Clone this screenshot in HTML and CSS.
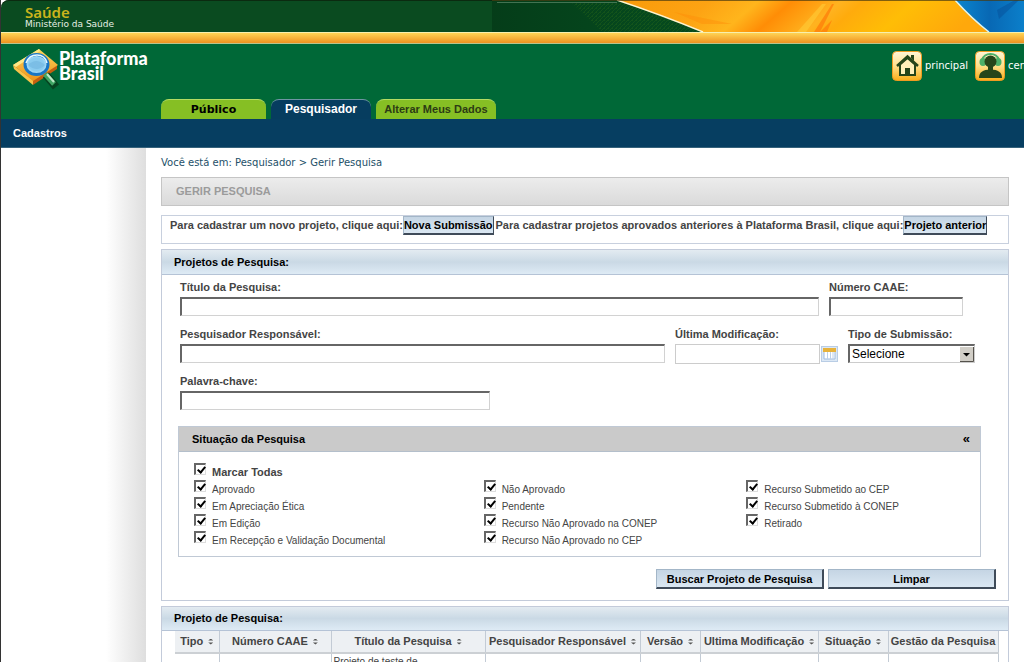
FILE: index.html
```html
<!DOCTYPE html>
<html lang="pt-BR">
<head>
<meta charset="utf-8">
<title>Plataforma Brasil</title>
<link rel="stylesheet" href="styles.css">
</head>
<body>
<header>
  <div class="banner">
    <div class="ministry"><span class="ministry-title">Saúde</span><span class="ministry-sub">Ministério da Saúde</span></div>
    <svg class="banner-art" viewBox="0 0 532 32" aria-hidden="true">
      <defs>
        <linearGradient id="dark"><stop offset="0" stop-color="#053d19"/><stop offset=".3" stop-color="#05491e"/><stop offset="1" stop-color="#004c20"/></linearGradient>
        <linearGradient id="silk" x2="1" y2=".1"><stop offset="0" stop-color="#f99a0a"/><stop offset=".25" stop-color="#fda313"/><stop offset=".38" stop-color="#ffb51c"/><stop offset=".47" stop-color="#ff8d06"/><stop offset=".54" stop-color="#ffa112"/><stop offset=".6" stop-color="#ffb320"/><stop offset=".66" stop-color="#ffab0c"/><stop offset=".8" stop-color="#ffbd06"/><stop offset="1" stop-color="#ffa80b"/></linearGradient>
        <linearGradient id="sky"><stop offset="0" stop-color="#0a86cf"/><stop offset=".5" stop-color="#0868b4"/><stop offset="1" stop-color="#0b7fca"/></linearGradient>
        <pattern id="weave" width="4" height="4" patternUnits="userSpaceOnUse"><path d="M0 4 4 0M0 0l1 1" stroke="#2f6b16" stroke-opacity=".5" stroke-width=".7"/></pattern>
      </defs>
      <path fill="url(#dark)" d="M0 0h532v32H0z"/>
      <path fill="url(#weave)" d="M80 3h70l62 29H110z"/>
      <path stroke="#6a9676" stroke-opacity=".6" d="M5 2.500h120"/>
      <path fill="url(#silk)" d="M125 0h338l34 32H211Q170 15 125 0z"/>
      <path fill="#ff8a08" fill-opacity=".4" d="M182 12 210 24l30 0z"/>
      <path fill="#ff7a08" fill-opacity=".7" d="M322 32l18-28 2 0-14 28zM328 32l12-12-5 12z"/>
      <path fill="#ffd13c" fill-opacity=".5" d="M305 32l25-28h4l-20 28z"/>
      <path fill="url(#sky)" d="M463 0h69v32h-35Q482 19 463 0z"/>
      <path fill="#054f9a" fill-opacity=".5" d="M505 10l18-10h4l-20 19z"/>
      <path fill="none" stroke="#fff3ce" stroke-width="1.500" d="M125 0Q170 15 211 32"/>
      <path fill="none" stroke="#d9f4f5" stroke-width="1.500" d="M463 0Q480 19 497 32"/>
      <path stroke="#4a3a10" stroke-opacity=".7" d="M0 .5h532"/>
    </svg>
  </div>
  <div class="gold"></div>
  <div class="brandbar">
    <div class="brand-row">
      <a class="brand" href="#">
        <svg width="46" height="42" viewBox="0 0 46 42" aria-hidden="true">
          <defs><linearGradient id="tile" x2="0" y2="1"><stop offset="0" stop-color="#ffd55b"/><stop offset="1" stop-color="#ee941b"/></linearGradient>
          <radialGradient id="lens"><stop offset="0" stop-color="#8cc9ed"/><stop offset=".65" stop-color="#8accf0"/><stop offset="1" stop-color="#bce6fb"/></radialGradient></defs>
          <path fill="#f7c34a" d="M0 17 20 32v5L1 21z"/>
          <path fill="#c45f10" d="M20 32 44 17v4L20 37z"/>
          <path fill="url(#tile)" d="M0 17 26 1 45 17 20 33z"/>
          <path fill="#ffe886" d="M0 17 26 1l1 2L3 19z"/>
          <path stroke="#064421" stroke-width="8" d="M33 27l10 12"/>
          <path stroke="#3fa463" stroke-width="5" d="M32 26l9 10"/>
          <path stroke="#bde8c7" stroke-width="2" d="M34 26l7 8"/>
          <ellipse cx="23.500" cy="16.500" rx="11.500" ry="10" fill="url(#lens)" stroke="#1976c5" stroke-width="3"/>
          <path fill="none" stroke="#e6f8ff" stroke-width="1.500" d="M13 15Q16 7 24 7t10 8"/>
          <path fill="#68b0dc" d="M15 17q8-8 17 0-8 8-17 0z" opacity=".45"/>
        </svg>
        <span class="brand-name"><span>Plataforma</span><span>Brasil</span></span>
      </a>
      <nav class="quick" aria-label="Atalhos">
        <a href="#"><svg width="30" height="30" viewBox="0 0 30 30" aria-hidden="true">
          <defs><linearGradient id="btn" x2="0" y2="1"><stop offset="0" stop-color="#fff6d8"/><stop offset=".5" stop-color="#ffdf8a"/><stop offset="1" stop-color="#f9ad17"/></linearGradient></defs>
          <rect x=".5" y=".5" width="29" height="29" rx="4" fill="url(#btn)" stroke="#ef9b21"/>
          <path fill="#fff0ba" stroke="#26451a" stroke-width="2" d="M8 13.500V24h15V13.500L15.500 7z"/>
          <path fill="none" stroke="#26451a" stroke-width="2.500" d="M5 15 15.500 5.500 26 15"/>
          <path fill="#26451a" d="M19 4h3v6l-3-3zM13 17h5v7h-5z"/>
        </svg>principal</a>
        <a href="#"><svg width="30" height="30" viewBox="0 0 30 30" aria-hidden="true">
          <rect x=".5" y=".5" width="29" height="29" rx="4" fill="url(#btn)" stroke="#ef9b21"/>
          <path fill="none" stroke="#4caf68" stroke-width="2" d="M7 9q2-6 8.500-6T24 9"/>
          <ellipse cx="8" cy="11" rx="3.500" ry="4" fill="#4caf68"/><ellipse cx="23" cy="11" rx="3.500" ry="4" fill="#4caf68"/>
          <circle cx="15.500" cy="10.500" r="6" fill="#26451a"/>
          <path fill="#26451a" d="M13 15h5v4h-5zM4 27q0-8.500 11.500-8.500T27 27z"/>
        </svg>central de suporte</a>
      </nav>
    </div>
    <nav class="tabs" aria-label="Seções">
      <a class="tab tab-public" href="#">Público</a>
      <a class="tab tab-active" href="#">Pesquisador</a>
      <a class="tab tab-data" href="#">Alterar Meus Dados</a>
    </nav>
  </div>
  <nav class="menubar" aria-label="Menu"><a href="#">Cadastros</a></nav>
</header>
<div class="page">
  <aside class="side"></aside>
  <main>
    <p class="crumb">Você está em: Pesquisador &gt; Gerir Pesquisa</p>
    <h1>GERIR PESQUISA</h1>
    <div class="notice">
      <span>Para cadastrar um novo projeto, clique aqui:</span><button class="btn btn-small" type="button">Nova Submissão</button>
      <span class="second">Para cadastrar projetos aprovados anteriores à Plataforma Brasil, clique aqui:</span><button class="btn btn-small" type="button">Projeto anterior</button>
    </div>
    <section class="panel">
      <h2>Projetos de Pesquisa:</h2>
      <form class="search">
        <div class="row row-title">
          <div class="field grow"><label for="titulo">Título da Pesquisa:</label><input id="titulo" type="text"></div>
          <div class="field caae"><label for="caae">Número CAAE:</label><input id="caae" type="text"></div>
        </div>
        <div class="row row-person">
          <div class="field grow"><label for="resp">Pesquisador Responsável:</label><input id="resp" type="text"></div>
          <div class="field date"><label for="data">Última Modificação:</label>
            <div class="date-line"><input id="data" class="flat" type="text"><button class="cal" type="button" aria-label="Calendário"><svg width="17" height="16" viewBox="0 0 17 16"><rect x=".5" y=".5" width="16" height="15" fill="#dce8f5" stroke="#b9cde5"/><path fill="#fff" stroke="#9fbbe0" d="M3 3h11v10H3z"/><path fill="#e7b23c" d="M2 2h13v4H2z"/><path stroke="#bcd0ea" d="M6.500 6v7M9.500 6v7M12 6v7"/></svg></button></div></div>
          <div class="field kind"><label for="tipo">Tipo de Submissão:</label>
            <div class="select"><select id="tipo"><option>Selecione</option></select><svg class="arrow" width="14" height="15" viewBox="0 0 14 15" aria-hidden="true"><path fill="#d1cec7" d="M0 0h14v15H0z"/><path fill="none" stroke="#55524c" d="M13.500 0v14.500H0"/><path d="M3 6h7L6.500 9.500z"/></svg></div></div>
        </div>
        <div class="field keyword"><label for="chave">Palavra-chave:</label><input id="chave" type="text"></div>
        <section class="status">
          <h3><span>Situação da Pesquisa</span><button type="button" aria-label="Recolher">«</button></h3>
          <div class="checks">
            <div>
              <label class="all"><input type="checkbox" checked>Marcar Todas</label>
              <label><input type="checkbox" checked>Aprovado</label>
              <label><input type="checkbox" checked>Em Apreciação Ética</label>
              <label><input type="checkbox" checked>Em Edição</label>
              <label><input type="checkbox" checked>Em Recepção e Validação Documental</label>
            </div>
            <div class="lower">
              <label><input type="checkbox" checked>Não Aprovado</label>
              <label><input type="checkbox" checked>Pendente</label>
              <label><input type="checkbox" checked>Recurso Não Aprovado na CONEP</label>
              <label><input type="checkbox" checked>Recurso Não Aprovado no CEP</label>
            </div>
            <div class="lower">
              <label><input type="checkbox" checked>Recurso Submetido ao CEP</label>
              <label><input type="checkbox" checked>Recurso Submetido à CONEP</label>
              <label><input type="checkbox" checked>Retirado</label>
            </div>
          </div>
        </section>
        <div class="actions"><button class="btn" type="button">Buscar Projeto de Pesquisa</button><button class="btn" type="reset">Limpar</button></div>
      </form>
    </section>
    <section class="panel">
      <h2>Projeto de Pesquisa:</h2>
      <div class="results">
        <table>
          <colgroup><col class="c1"><col class="c2"><col class="c3"><col class="c4"><col class="c5"><col class="c6"><col class="c7"><col class="c8"></colgroup>
          <thead><tr><th>Tipo<i class="sort"></i></th><th>Número CAAE<i class="sort"></i></th><th>Título da Pesquisa<i class="sort"></i></th><th>Pesquisador Responsável<i class="sort"></i></th><th>Versão<i class="sort"></i></th><th>Ultima Modificação<i class="sort"></i></th><th>Situação<i class="sort"></i></th><th>Gestão da Pesquisa</th></tr></thead>
          <tbody><tr><td></td><td></td><td>Projeto de teste de</td><td></td><td></td><td></td><td></td><td></td></tr></tbody>
        </table>
      </div>
    </section>
  </main>
</div>
</body>
</html>
```
FILE: styles.css
```css
* { box-sizing: border-box; }
body {
  margin: 0;
  height: 100vh;
  overflow: hidden;
  border-left: 1px solid #333;
  background: #fff;
  color: #444;
  font: 11px/14px "Liberation Sans", Arial, sans-serif;
}
a { color: inherit; text-decoration: none; }
h1, h2, h3, p { margin: 0; }
button, input, select { font: inherit; color: #000; margin: 0; border-radius: 0; }

.banner {
  display: flex;
  justify-content: space-between;
  height: 32px;
  background: #0a4b20;
  box-shadow: inset 0 1px #0b2a10;
  border-top-left-radius: 8px;
}
.ministry { display: flex; flex-direction: column; padding: 5px 0 0 24px; }
.ministry-title { color: #c9b41c; font: 600 15px/15px "Noto Sans", sans-serif; }
.ministry-sub { color: #e6efe4; font: 9px/9px "DejaVu Sans", sans-serif; }
.banner-art { width: 532px; height: 32px; flex: none; }
.gold {
  height: 12px;
  background: linear-gradient(#ffd354, #ef9220);
  border-top: 1px solid #f7efae;
  border-bottom: 1px solid #b8c48e;
}
.brandbar { background: #006837; }
.brand-row { display: flex; justify-content: space-between; height: 55px; padding-left: 12px; }
.brand { display: flex; padding-top: 4px; }
.brand-name {
  display: flex;
  flex-direction: column;
  padding-top: 3px;
  color: #fff;
  font: 900 18px/15px Lato, sans-serif;
}
.quick { display: flex; gap: 7px; width: 132px; overflow: hidden; padding-top: 7px; }
.quick a {
  display: flex;
  flex: none;
  align-items: center;
  gap: 3px;
  height: 30px;
  color: #fff;
  font: 10px/14px "DejaVu Sans", sans-serif;
}
.tabs { display: flex; gap: 5px; padding-left: 160px; }
.tab {
  height: 20px;
  border-radius: 8px 8px 0 0;
  border-top: 1px solid #b3dc62;
  background: #86bf24;
  color: #16260d;
  text-align: center;
  font: bold 11px/19px "Liberation Sans", Arial, sans-serif;
}
.tab-public { width: 105px; color: #000; font: bold 11px/19px "DejaVu Sans", sans-serif; }
.tab-active { width: 100px; background: #063d5f; border-top-color: #6f95a4; color: #fff; font-size: 12px; }
.tab-data { width: 120px; color: #2c3b14; }
.menubar {
  height: 29px;
  padding: 7px 12px;
  background: #063e61;
  border-bottom: 1px solid #36637c;
  color: #fff;
  font-weight: bold;
}

.page { display: flex; min-height: calc(100vh - 148px); }
.side { flex: none; width: 145px; background: linear-gradient(90deg, #fff 105px, #dedede); }
main { flex: 1; min-width: 0; padding: 8px 15px 0 15px; }
.crumb { color: #245069; font: 10px/14px "DejaVu Sans", sans-serif; }
h1 {
  margin-top: 7px;
  height: 29px;
  padding-left: 14px;
  border: 1px solid #c5c5c5;
  background: linear-gradient(#ececec, #dadada);
  color: #9b9b9b;
  font-size: 11px;
  line-height: 26px;
}
.notice {
  display: flex;
  align-items: flex-start;
  margin-top: 9px;
  height: 29px;
  padding-left: 8px;
  border: 1px solid #c8d0de;
  font-weight: bold;
  line-height: 19px;
  white-space: nowrap;
}
.second { margin-left: 2px; }
.btn {
  height: 20px;
  width: 168px;
  padding: 0;
  border: 1px solid #a3b6c8;
  border-right: 2px solid #3f4b59;
  border-bottom: 2px solid #3f4b59;
  background: linear-gradient(#c5d5e4, #dae7f2);
  font-weight: bold;
  line-height: 14px;
}
.btn-small { width: auto; height: 19px; border-right-width: 1px; }
.panel { margin-top: 5px; border: 1px solid #c3cbda; }
h2 {
  height: 25px;
  padding-left: 12px;
  border-bottom: 1px solid #b5c3d6;
  background: linear-gradient(#e3ebf1, #cad9e5 50%, #deebf5);
  color: #000;
  font-size: 11px;
  line-height: 24px;
}
.panel + .panel h2 { height: 24px; line-height: 23px; }
.search { padding: 5px 12px 11px 18px; }
.row { display: flex; gap: 10px; margin-bottom: 11px; }
.row-title { padding-right: 33px; }
.row-person { padding-right: 21px; margin-bottom: 10px; }
.field { display: flex; flex-direction: column; gap: 3px; }
.field > label { font-weight: bold; white-space: nowrap; }
.grow { flex: 1; }
.field input {
  width: 100%;
  height: 19px;
  border: 1px solid #d2d2d2;
  border-top: 2px solid #666;
  border-left: 2px solid #666;
  background: #fff;
}
.caae { width: 134px; }
.date { width: 163px; }
.kind { width: 127px; }
.keyword { width: 38%; }
.date-line { display: flex; align-items: center; gap: 1px; }
.field .flat { flex: 1; min-width: 0; height: 20px; border: 1px solid #ccc; }
.cal { flex: none; display: flex; padding: 0; border: 0; background: none; }
.select { display: flex; align-items: center; height: 19px; border: 1px solid #ccc; border-top: 2px solid #666; border-left: 2px solid #666; }
.select select { flex: 1; min-width: 0; height: 16px; padding: 0 2px; border: 0; background: #fff; appearance: none; font-size: 12px; line-height: 16px; }
.arrow { flex: none; }
.status { margin: 16px 15px 0 -2px; border: 1px solid #c0c9d5; }
h3 {
  display: flex;
  justify-content: space-between;
  height: 25px;
  padding: 0 10px 0 13px;
  background: #cacaca;
  border-bottom: 1px solid #b4bfcb;
  color: #000;
  font-size: 11px;
  line-height: 24px;
}
h3 button { padding: 0; border: 0; background: none; font-size: 13px; }
.checks { display: grid; grid-template-columns: 290fr 263fr 234fr; padding: 11px 0 8px 15px; }
.checks label { display: flex; height: 17px; gap: 6px; font-size: 10px; line-height: 19px; white-space: nowrap; }
.checks .all { font-size: 11px; font-weight: bold; }
.lower { padding-top: 17px; }
.checks input {
  flex: none;
  appearance: none;
  width: 12px;
  height: 12px;
  border: 1px solid #ddd;
  border-top: 2px solid #666;
  border-left: 2px solid #666;
  position: relative;
}
.checks input:checked::after {
  content: "";
  position: absolute;
  left: 3px;
  top: 0;
  width: 3px;
  height: 6px;
  border: solid #000;
  border-width: 0 2px 2px 0;
  transform: rotate(40deg);
}
.actions { display: flex; justify-content: flex-end; gap: 4px; margin-top: 12px; }
.results { padding: 0 10px 0 13px; }
table { width: 100%; border-collapse: collapse; table-layout: fixed; }
th, td { padding: 0; border-right: 1px solid #c3cbd5; white-space: nowrap; }
th { height: 22px; padding-bottom: 2px; background: #edf0f3; border-bottom: 2px solid #ccd0d4; font-size: 11px; line-height: 18px; }
td { height: 30px; padding: 1px 2px; vertical-align: top; font-size: 10px; line-height: 14px; }
.sort {
  display: inline-block;
  width: 5px;
  height: 6px;
  margin-left: 5px;
  background: #555;
  clip-path: polygon(50% 0, 100% 35%, 0 35%, 0 65%, 100% 65%, 50% 100%, 0 65%, 0 35%);
}
.c1 { width: 44px; }
.c2 { width: 112px; }
.c3 { width: 154px; }
.c4 { width: 155px; }
.c5 { width: 60px; }
.c6 { width: 118px; }
.c7 { width: 70px; }
.c8 { width: 110px; }
```
